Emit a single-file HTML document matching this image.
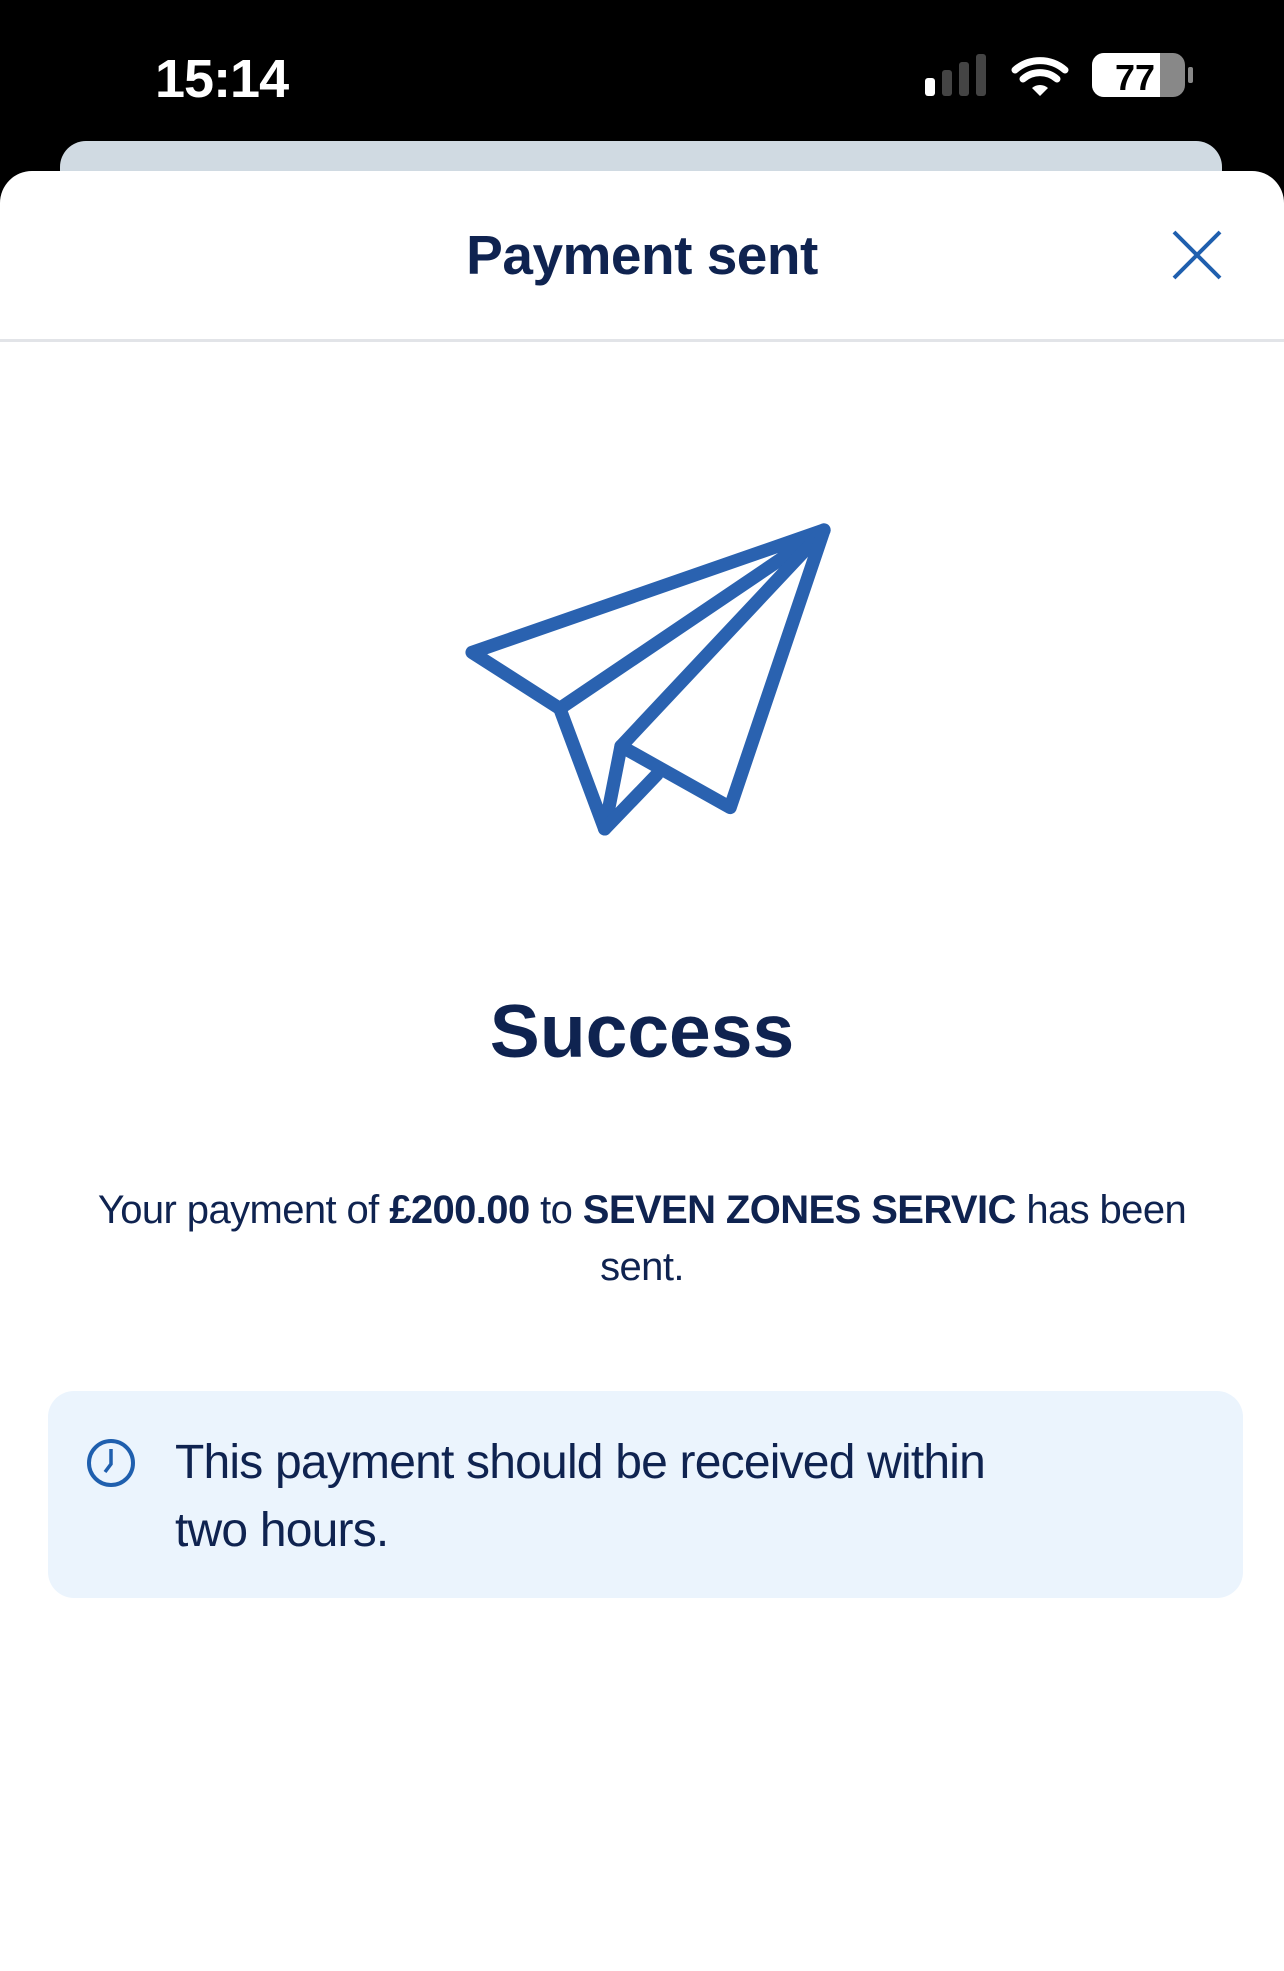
<!DOCTYPE html>
<html><head><meta charset="utf-8"><style>
*{margin:0;padding:0;box-sizing:border-box}
body{width:1284px;height:1961px;background:#000;position:relative;overflow:hidden;font-family:"Liberation Sans",sans-serif}
.time{position:absolute;left:155px;top:48px;color:#fff;font-size:54px;font-weight:bold;letter-spacing:-1px}
.back{position:absolute;left:60px;top:141px;width:1162px;height:80px;background:#d0dae2;border-radius:26px 26px 0 0}
.sheet{position:absolute;left:0;top:171px;width:1284px;height:1800px;background:#fff;border-radius:32px 32px 0 0}
.title{position:absolute;left:0;width:1284px;top:223px;text-align:center;font-size:55px;font-weight:bold;color:#0f2350;letter-spacing:-0.5px}
.div{position:absolute;left:0;top:339px;width:1284px;height:3px;background:#e2e4e8}
.succ{position:absolute;left:0;width:1284px;top:988px;text-align:center;font-size:75px;font-weight:bold;color:#0f2350}
.para{position:absolute;left:80px;width:1124px;top:1182px;text-align:center;font-size:40px;line-height:57px;color:#0f2350;letter-spacing:-0.6px}
.box{position:absolute;left:48px;top:1391px;width:1195px;height:207px;background:#ebf4fd;border-radius:26px}
.btxt{position:absolute;left:175px;top:1429px;width:1000px;font-size:48px;line-height:68px;color:#0f2350;letter-spacing:-0.8px}
</style></head><body>
<div class="time">15:14</div>
<svg style="position:absolute;left:920px;top:50px" width="280" height="52" viewBox="0 0 280 52">
<rect x="5" y="28" width="10" height="18" rx="3" fill="#fff"/>
<rect x="22" y="20" width="10" height="26" rx="3" fill="#444"/>
<rect x="39" y="12" width="10" height="34" rx="3" fill="#444"/>
<rect x="56" y="4" width="10" height="42" rx="3" fill="#444"/>
<path d="M95 20 A38 38 0 0 1 145 20" stroke="#fff" stroke-width="7" fill="none" stroke-linecap="round"/>
<path d="M103 29 A26 26 0 0 1 137 29" stroke="#fff" stroke-width="7" fill="none" stroke-linecap="round"/>
<path d="M112 38 L120 46 L128 38 A12 12 0 0 0 112 38Z" fill="#fff"/>
<rect x="172" y="3" width="93" height="44" rx="12" fill="#888"/>
<path d="M184 3 H240 V47 H184 A12 12 0 0 1 172 35 V15 A12 12 0 0 1 184 3Z" fill="#fff"/>
<rect x="268" y="17" width="5" height="16" rx="2" fill="#888"/>
<text x="215" y="40" text-anchor="middle" font-family="Liberation Sans" font-weight="bold" font-size="36" fill="#000">77</text>
</svg>
<div class="back"></div>
<div class="sheet"></div>
<div class="title">Payment sent</div>
<svg style="position:absolute;left:1167px;top:226px" width="60" height="60" viewBox="0 0 60 60"><path d="M7 6 L53 52 M53 6 L7 52" stroke="#1f5fae" stroke-width="4"/></svg>
<div class="div"></div>
<svg style="position:absolute;left:0;top:0" width="1284" height="1000">
<g transform="translate(468 528) scale(1.02) translate(-468 -528)" fill="none" stroke="#2a62b0" stroke-width="13" stroke-linejoin="round" stroke-linecap="round">
<path d="M817 530 L472 650 L558 705 Z"/>
<path d="M558 705 L602 823 L618 742 L817 530"/>
<path d="M618 742 L725 802 L817 530"/>
<path d="M602 823 L653 770"/>
</g></svg>
<div class="succ">Success</div>
<div class="para">Your payment of <b>£200.00</b> to <b>SEVEN ZONES SERVIC</b> has been sent.</div>
<div class="box"></div>
<svg style="position:absolute;left:85px;top:1437px" width="52" height="52" viewBox="0 0 52 52"><circle cx="26" cy="26" r="22" stroke="#1f5fae" stroke-width="4" fill="none"/><path d="M26 12 V27 L20 35" stroke="#1f5fae" stroke-width="3.5" fill="none"/></svg>
<div class="btxt">This payment should be received within<br>two hours.</div>
</body></html>
